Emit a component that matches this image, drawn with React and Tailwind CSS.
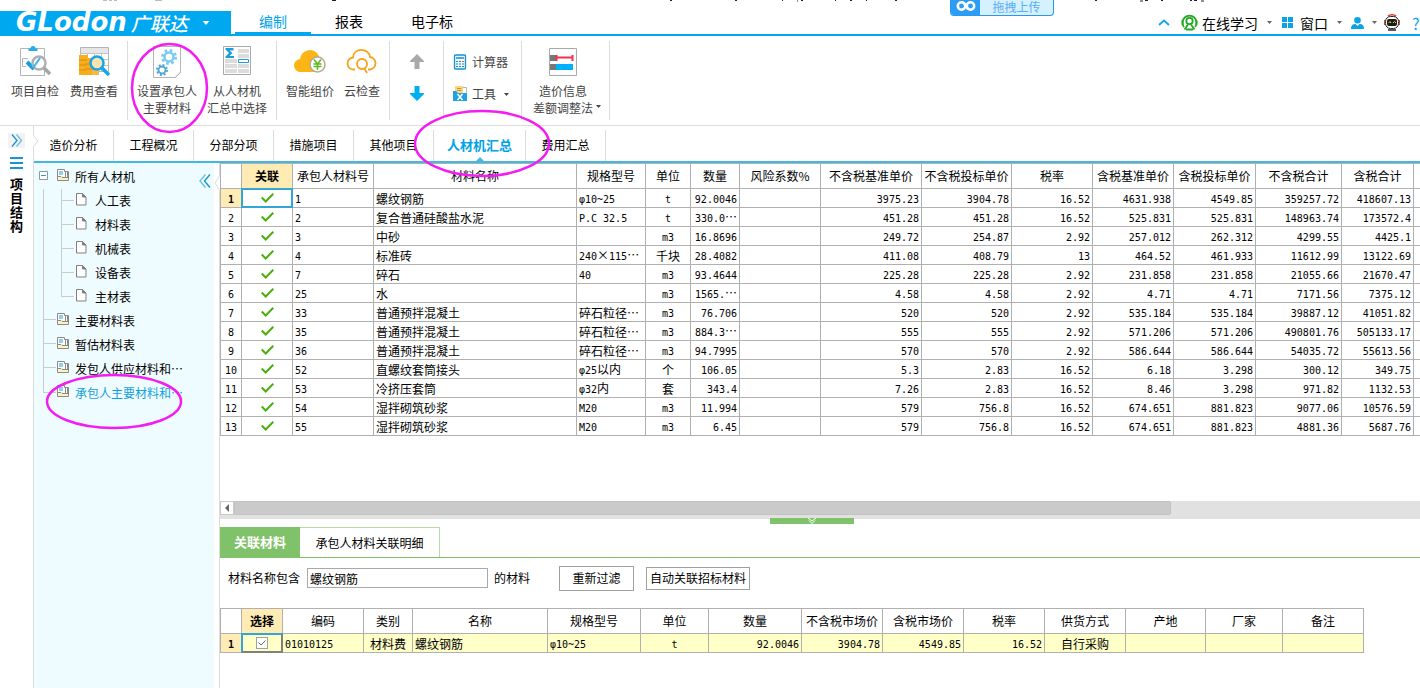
const mainCols = [
    { title: "", w: "w-[21px]" },
    { title: "关联", w: "w-[51px]" },
    { title: "承包人材料号", w: "w-[81px]" },
    { title: "材料名称", w: "w-[203px]" },
    { title: "规格型号", w: "w-[69px]" },
    { title: "单位", w: "w-[45px]", align: "center" },
    { title: "数量", w: "w-[49px]", align: "right" },
    { title: "风险系数%", w: "w-[81px]" },
    { title: "不含税基准单价", w: "w-[101px]", align: "right" },
    { title: "不含税投标单价", w: "w-[90px]", align: "right" },
    { title: "税率", w: "w-[81px]", align: "right" },
    { title: "含税基准单价", w: "w-[81px]", align: "right" },
    { title: "含税投标单价", w: "w-[82px]", align: "right" },
    { title: "不含税合计", w: "w-[86px]", align: "right" },
    { title: "含税合计", w: "w-[72px]", align: "right" },
    { title: "", w: "w-[80px]" },
]

const mainRows = [
    ["1", "螺纹钢筋", "φ10~25", "t", "92.0046", "", "3975.23", "3904.78", "16.52", "4631.938", "4549.85", "359257.72", "418607.13", ""],
    ["2", "复合普通硅酸盐水泥", "P.C 32.5", "t", "330.0⋯", "", "451.28", "451.28", "16.52", "525.831", "525.831", "148963.74", "173572.4", ""],
    ["3", "中砂", "", "m3", "16.8696", "", "249.72", "254.87", "2.92", "257.012", "262.312", "4299.55", "4425.1", ""],
    ["4", "标准砖", "240×115⋯", "千块", "28.4082", "", "411.08", "408.79", "13", "464.52", "461.933", "11612.99", "13122.69", ""],
    ["7", "碎石", "40", "m3", "93.4644", "", "225.28", "225.28", "2.92", "231.858", "231.858", "21055.66", "21670.47", ""],
    ["25", "水", "", "m3", "1565.⋯", "", "4.58", "4.58", "2.92", "4.71", "4.71", "7171.56", "7375.12", ""],
    ["33", "普通预拌混凝土", "碎石粒径⋯", "m3", "76.706", "", "520", "520", "2.92", "535.184", "535.184", "39887.12", "41051.82", ""],
    ["35", "普通预拌混凝土", "碎石粒径⋯", "m3", "884.3⋯", "", "555", "555", "2.92", "571.206", "571.206", "490801.76", "505133.17", ""],
    ["36", "普通预拌混凝土", "碎石粒径⋯", "m3", "94.7995", "", "570", "570", "2.92", "586.644", "586.644", "54035.72", "55613.56", ""],
    ["52", "直螺纹套筒接头", "φ25以内", "个", "106.05", "", "5.3", "2.83", "16.52", "6.18", "3.298", "300.12", "349.75", ""],
    ["53", "冷挤压套筒", "φ32内", "套", "343.4", "", "7.26", "2.83", "16.52", "8.46", "3.298", "971.82", "1132.53", ""],
    ["54", "湿拌砌筑砂浆", "M20", "m3", "11.994", "", "579", "756.8", "16.52", "674.651", "881.823", "9077.06", "10576.59", ""],
    ["55", "湿拌砌筑砂浆", "M20", "m3", "6.45", "", "579", "756.8", "16.52", "674.651", "881.823", "4881.36", "5687.76", ""],
]

const linkCols = [
    { title: "", w: "w-[21px]" },
    { title: "选择", w: "w-[41px]" },
    { title: "编码", w: "w-[81px]" },
    { title: "类别", w: "w-[49px]", align: "center" },
    { title: "名称", w: "w-[135px]" },
    { title: "规格型号", w: "w-[93px]" },
    { title: "单位", w: "w-[68px]", align: "center" },
    { title: "数量", w: "w-[93px]", align: "right" },
    { title: "不含税市场价", w: "w-[81px]", align: "right" },
    { title: "含税市场价", w: "w-[81px]", align: "right" },
    { title: "税率", w: "w-[81px]", align: "right" },
    { title: "供货方式", w: "w-[81px]", align: "center" },
    { title: "产地", w: "w-[80px]" },
    { title: "厂家", w: "w-[77px]" },
    { title: "备注", w: "w-[81px]" },
]

const linkRow = ["01010125", "材料费", "螺纹钢筋", "φ10~25", "t", "92.0046", "3904.78", "4549.85", "16.52", "自行采购", "", "", ""]

const aligns = {
    left: "text-left pl-[2px]",
    center: "text-center",
    right: "text-right pr-[2px]",
}

// latin runs use a mono face, so the digits line up in the columns
function Txt({ children }) {
    return children.split(/([\x20-\x7eφ]+)/).map((part, i) =>
        i % 2 ? <span key={i} className="font-['DejaVu_Sans_Mono',monospace] text-[10px]">{part}</span> : part
    )
}

function Caret({ className = "" }) {
    return <svg className={className} width="5" height="3" viewBox="0 0 5 3"><path d="M0 0h5L2.5 3z" fill="currentColor" /></svg>
}

function Ring({ className }) {
    return <svg className={"absolute z-10 pointer-events-none overflow-visible " + className} viewBox="0 0 100 100" preserveAspectRatio="none">
        <ellipse cx="50" cy="50" rx="50" ry="50" fill="none" stroke="#f31df3" strokeWidth="2.5" vectorEffect="non-scaling-stroke" />
    </svg>
}

/* ---------- ribbon icons ---------- */

function CheckBoardIcon() {
    return <svg width="32" height="34" viewBox="0 0 32 34" fill="none">
        <path d="M1.500 3.500h24v27h-24z" stroke="#b5b5b5" fill="#fff" />
        <path d="M9.500 6V3.500h2a2.500 2.500 0 0 1 5 0h2V6z" fill="#27aee6" />
        <path d="M9 13.500H3.500v8H7" stroke="#b5b5b5" />
        <path d="M8 17l7 7" stroke="#1a9fe0" strokeWidth="4" />
        <circle cx="20" cy="18" r="6.500" fill="#fff" stroke="#b0b0b0" strokeWidth="2.500" />
        <path d="M25 23l6 6" stroke="#a5a5a5" strokeWidth="3.500" />
        <path d="M14 23l7-10" stroke="#35b6ee" strokeWidth="2" />
    </svg>
}

function CostIcon() {
    return <svg width="32" height="34" viewBox="0 0 32 34" fill="none">
        <path d="M2.500 2.500h28v24h-28z" fill="#fff" stroke="#b5b5b5" />
        <path d="M3 3h27v5H3z" fill="#e6e6e6" />
        <path d="M2 8.500h28M2 14.500h28M2 20.500h28M9.500 8v18M16.500 8v18M23.500 8v18" stroke="#c4c4c4" />
        <path d="M1 10h9v20H1zM7 13h10v17H7z" fill="#f9ad1c" />
        <path d="M14 17h7v13h-7z" fill="#f7b943" />
        <path d="M1 15h8M1 20h7M1 25h7M7 19h10M7 24h14" stroke="#d98c0a" />
        <circle cx="19" cy="18" r="6.500" fill="#fbe3b0" stroke="#16a6ea" strokeWidth="2.500" />
        <path d="M24 23l7 7" stroke="#16a6ea" strokeWidth="3.500" />
    </svg>
}

function GearsIcon() {
    return <svg width="30" height="34" viewBox="0 0 30 34" fill="none">
        <path d="M1.500 1.500h27v26l-5 5h-22z" fill="#fff" stroke="#b5b5b5" />
        <path d="M23.500 32l5-5" stroke="#b5b5b5" />
        <circle cx="17" cy="12" r="4.500" stroke="#7ccbf2" strokeWidth="2.500" />
        <circle cx="17" cy="12" r="6.500" stroke="#7ccbf2" strokeWidth="3" strokeDasharray="2.550 2.550" />
        <circle cx="10" cy="25" r="3.500" stroke="#4fa6d6" strokeWidth="1.800" />
        <circle cx="10" cy="25" r="5" stroke="#4fa6d6" strokeWidth="2" strokeDasharray="1.960 1.960" />
    </svg>
}

function SumIcon() {
    return <svg width="28" height="34" viewBox="0 0 28 34" fill="none">
        <path d="M.5 1.500h27v28H.5z" fill="#fff" stroke="#a9a9a9" />
        <path d="M15 4h11v4H15zM2 14h12v4H2zM15 9h11v4H15zM2 19h12v4H2zM15 19h11v4H15zM2 24h12v4H2zM15 24h11v4H15z" fill="#dcdcdc" />
        <path d="M2.500 3h8v2.500H6.500L9.500 8l-3 3h4.500V13H2.500v-1.500L6 8 2.500 4.500z" fill="#1b9fdc" />
        <path d="M15.500 14.500h10v3h-10z" fill="#fff" stroke="#1b9fdc" />
    </svg>
}

function CloudMoneyIcon() {
    return <svg width="32" height="34" viewBox="0 0 32 34" fill="none">
        <path d="M7 27a6.500 6.500 0 0 1-1-13 10 10 0 0 1 17-6 9 9 0 0 1 2 8v11z" fill="#fdb515" />
        <circle cx="23.500" cy="19.500" r="7.500" fill="#fff" stroke="#b3aa90" strokeWidth="1.500" />
        <path d="M20 14.500l3.500 4.500 3.500-4.500M19.500 19h8M19.500 21.500h8M23.500 19v6" stroke="#5fb81c" strokeWidth="1.500" />
    </svg>
}

function CloudSearchIcon() {
    return <svg width="32" height="34" viewBox="0 0 32 34" fill="none" stroke="#f9a11b" strokeWidth="1.800">
        <path d="M9 24.500H8a6 6 0 0 1-1-12C8 2 23 3 24 12a6.300 6.300 0 0 1 0 12.500h-2" />
        <circle cx="16" cy="19" r="5" />
        <path d="M18 23l3 5" />
    </svg>
}

function CalcIcon() {
    return <svg width="14" height="16" viewBox="0 0 14 16" fill="none">
        <rect x="1.500" y="1" width="11" height="14" rx="1" fill="#e9f7fd" stroke="#1d8fc9" strokeWidth="1.300" />
        <path d="M3 4h8" stroke="#1d8fc9" strokeWidth="1.500" />
        <path d="M3 7.500h8M3 10h8M3 12.500h8" stroke="#1d8fc9" strokeDasharray="2 1" />
        <path d="M9 7.500h2" stroke="#f0522a" />
    </svg>
}

function ToolIcon() {
    return <svg width="15" height="16" viewBox="0 0 15 16" fill="none">
        <path d="M9 1.500h4.500v5" stroke="#b5b5b5" />
        <path d="M2 0h8v8H2z" fill="#fbd682" /><path d="M4 2.500h4.500M4 4.500h4.500" stroke="#c69a35" />
        <path d="M0 5h3l2 2h9v8H0z" fill="#1ea3e0" />
        <path d="M4.500 8l5 6M9.500 8l-5 6" stroke="#fff" strokeWidth="1.500" />
    </svg>
}

function PriceIcon() {
    return <svg width="28" height="34" viewBox="0 0 28 34" fill="none">
        <path d="M.5 3.500h27v27H.5z" fill="#fff" stroke="#a9a9a9" />
        <path d="M1 10h6v6H1zM1 19h6v6H1z" fill="#777" />
        <path d="M7 12.500h17M7.500 10v6M23.500 10v6" stroke="#f5304a" strokeWidth="2" />
        <path d="M7 19h17v6H7z" fill="#00b0ff" />
    </svg>
}

function RibbonButton({ icon, lines, caret, ring }) {
    return (
        <button type="button" className="relative flex flex-col items-center pt-1">
            <span className="flex h-[34px] items-center">{icon}</span>
            <span className="mt-[3px] flex flex-col items-center leading-[17px] whitespace-nowrap">
                {lines.map((l, i) => (
                    <span key={l} className="relative">{l}{caret && i === 1 && <Caret className="absolute top-[6px] left-full ml-[3px]" />}</span>
                ))}
            </span>
            {ring && <Ring className="-left-[5px] top-[3px] h-[88px] w-[75px]" />}
        </button>
    )
}

function TopBar() {
    return (
        <header className="relative pt-[11px]">
            {/* descenders of the window title behind */}
            <svg className="absolute top-0 left-0" width="1210" height="3" viewBox="0 0 1210 3" fill="none">
                <path d="M103 .5h4M109 .5h3M114 .5h3M155 .5h7" stroke="#bbb" />
                <path d="M332 .5h4M670 .5h2M735 .5h2M782 .5h1M797 1h1M801 .5h2M835 .5h1M850 .5h2M866 .5h1M895 .5h2M1095 .5h2M1140 1h3M1145 .5h3M1161 .5h2M1190 .5h2M1194 .5h3M1201 1h3" stroke="#222" />
            </svg>
            <div className="absolute top-0 right-[366px] flex h-4 w-[104px] overflow-hidden rounded-b border border-t-0 border-[#2b97f0] bg-[#d5f0ff] text-[#5aaef2]">
                <span className="flex w-[29px] justify-center bg-[#2b9df5]">
                    <svg className="-mt-[3px]" width="20" height="15" viewBox="0 0 20 15" fill="none" stroke="#fff" strokeWidth="2.500">
                        <circle cx="5.500" cy="9" r="3.700" /><circle cx="14.500" cy="9" r="3.700" /><path d="M8 6l4 6" />
                    </svg>
                </span>
                <a href="#upload" className="flex-1 text-center leading-[14px]">拖拽上传</a>
            </div>
            <div className="flex h-[25px] items-stretch border-b-2 border-[#00a8f0]">
                <div className="flex w-[231px] items-center bg-[#00a8f0] pl-4 text-white">
                    <span className="font-['DejaVu_Sans',sans-serif] text-[26px] leading-[23px] font-bold italic">GLodon</span>
                    <span className="ml-1 text-[19px] leading-[23px] font-medium italic">广联达</span>
                    <Caret className="ml-[14px] h-1 w-2" />
                </div>
                <nav className="ml-1 flex text-[14px] leading-5">
                    <a href="#edit" className="-mb-[2px] w-[76px] border-b-4 border-[#00a8f0] text-center text-[#00a2e8]">编制</a>
                    <a href="#report" className="w-[76px] text-center">报表</a>
                    <a href="#tender" className="w-[90px] text-center">电子标</a>
                </nav>
                <div className="ml-auto flex items-center text-[14px] leading-[22px] text-black">
                    <svg width="12" height="7" viewBox="0 0 12 7" fill="none" stroke="#1ba5e6" strokeWidth="2"><path d="M1 6l5-4.500L11 6" /></svg>
                    <svg className="ml-[11px]" width="17" height="17" viewBox="0 0 17 17" fill="none" stroke="#22a822" strokeWidth="1.800">
                        <path d="M3 13A7 7 0 1 1 14 13" /><circle cx="8.500" cy="7" r="3.200" /><path d="M3.500 15.500l3.500-5M13.500 15.500l-3.500-5M5 15.500h7" /><path d="M1.500 6v5M15.500 6v5" />
                    </svg>
                    <a href="#learn" className="ml-1">在线学习</a>
                    <Caret className="ml-[9px] text-[#666]" />
                    <svg className="ml-[10px]" width="11" height="11" viewBox="0 0 11 11" fill="#0da2e8"><path d="M0 0h5v5H0zM6 0h5v5H6zM0 6h5v5H0zM6 6h5v5H6z" /></svg>
                    <a href="#window" className="ml-[7px]">窗口</a>
                    <Caret className="ml-[9px] text-[#666]" />
                    <svg className="ml-[9px]" width="13" height="12" viewBox="0 0 13 12" fill="#0da2e8"><circle cx="6.500" cy="3.300" r="3.300" /><path d="M0 12c0-4 2-5 4.500-5l2 2 2-2C11 7 13 8 13 12z" /></svg>
                    <Caret className="ml-[8px] text-[#666]" />
                    <svg className="ml-[7px]" width="16" height="17" viewBox="0 0 16 17" fill="none">
                        <path d="M4 2Q8-.5 12 2" stroke="#e0442a" strokeWidth="1.500" />
                        <rect x="1.500" y="2.500" width="13" height="12" rx="5" fill="#fff" stroke="#222" />
                        <path d="M0 6v5M16 6v5" stroke="#e0442a" strokeWidth="2" />
                        <rect x="3" y="5" width="10" height="7" rx="2" fill="#1b1b1b" />
                        <path d="M4.500 9l1.500-1.500L7 9M9 9l1.500-1.500L12 9" stroke="#e8e020" />
                        <path d="M4 16h8" stroke="#222" strokeWidth="1.500" />
                    </svg>
                    <a href="#help" className="ml-3 w-[8px] text-[16px] text-[#0da2e8]">?</a>
                </div>
            </div>
        </header>
    )
}

function Ribbon() {
    const group = "flex items-start border-r border-[#dcdcdc]"
    return (
        <div className="flex border-b border-[#dcdcdc] py-[5px] text-[#444]">
            <div className={group + " h-[79px] gap-[11px] pl-[11px] pr-[9px]"}>
                <RibbonButton icon={<CheckBoardIcon />} lines={["项目自检"]} />
                <RibbonButton icon={<CostIcon />} lines={["费用查看"]} />
            </div>
            <div className={group + " h-[79px] gap-[10px] px-[9px]"}>
                <RibbonButton icon={<GearsIcon />} lines={["设置承包人", "主要材料"]} ring />
                <RibbonButton icon={<SumIcon />} lines={["从人材机", "汇总中选择"]} />
            </div>
            <div className={group + " gap-[10px] px-[9px]"}>
                <RibbonButton icon={<CloudMoneyIcon />} lines={["智能组价"]} />
                <RibbonButton icon={<CloudSearchIcon />} lines={["云检查"]} />
            </div>
            <div className={group + " w-[54px] flex-col !items-center gap-4 pt-[13px]"}>
                <button type="button" aria-label="上移">
                    <svg className="block" width="14" height="16" viewBox="0 0 14 16" fill="#a9a9a9"><path d="M7 0l7 7v1h-4.500v7h-5V8H0V7z" /></svg>
                </button>
                <button type="button" aria-label="下移">
                    <svg className="block" width="14" height="16" viewBox="0 0 14 16" fill="#00aff0"><path d="M7 15l7-7V7h-4.500V0h-5v7H0v1z" /></svg>
                </button>
            </div>
            <div className={group + " w-[78px] flex-col gap-4 pt-[13px] pl-[9px] leading-4"}>
                <button type="button" className="flex items-center gap-[5px]"><CalcIcon />计算器</button>
                <button type="button" className="flex items-center gap-[4px]"><ToolIcon />工具<Caret className="ml-1" /></button>
            </div>
            <div className={group + " h-[79px] pl-[11px] pr-[16px]"}>
                <RibbonButton icon={<PriceIcon />} lines={["造价信息", "差额调整法"]} caret />
            </div>
        </div>
    )
}

function Rail() {
    return (
        <div className="flex w-[34px] shrink-0 flex-col items-center border-r border-[#dcdcdc] pt-[7px]">
            <button type="button" aria-label="展开" className="flex h-[15px] w-[17px] items-center justify-center bg-[#f2f2f2]">
                <svg width="12" height="13" viewBox="0 0 12 13" fill="none" strokeWidth="1.300"><path d="M1 .5l5 6-5 6" stroke="#1794c9" /><path d="M5.500.5l5 6-5 6" stroke="#6cc0e2" /></svg>
            </button>
            <svg className="mt-[9px]" width="13" height="12" viewBox="0 0 13 12" fill="#1794d2"><path d="M0 0h13v2H0zM0 5h13v2H0zM0 10h13v2H0z" /></svg>
            <h2 className="mt-2 w-[13px] text-[13px] leading-[14px] font-bold break-all">项目结构</h2>
        </div>
    )
}

const modules = ["造价分析", "工程概况", "分部分项", "措施项目", "其他项目", "人材机汇总", "费用汇总"]

function ModuleTabs() {
    return (
        <nav className="relative flex border-b-2 border-[#43b8e3] pt-1">
            <svg className="absolute top-[9px] -left-px" width="6" height="12" viewBox="0 0 6 12" fill="#fff" stroke="#dcdcdc"><path d="M0 0l5 6-5 6" /></svg>
            {modules.map(m => m === "人材机汇总" ? (
                <a key={m} href="#" className="relative w-[92px] border-r border-[#dcdcdc] pb-0.5 text-center text-[13px] leading-[29px] font-bold text-[#00a2e8]">
                    {m}
                    <svg className="absolute bottom-0 left-[42px]" width="8" height="4" viewBox="0 0 8 4" fill="#43b8e3"><path d="M0 4l4-4 4 4z" /></svg>
                    <Ring className="-left-[19px] -top-[19px] h-[65px] w-[134px]" />
                </a>
            ) : (
                <a key={m} href="#" className="w-[80px] border-r border-[#dcdcdc] pb-0.5 text-center leading-[29px]">{m}</a>
            ))}
        </nav>
    )
}

function BookIcon() {
    return <svg width="13" height="13" viewBox="0 0 13 13" fill="none">
        <path d="M.5 11.500V.5h7v2h4v9z" fill="#fff" stroke="#8a8a8a" />
        <path d="M2 3h4M2 5h4" stroke="#2b9fd6" /><path d="M8.500 2v6M10.500 3v5" stroke="#8a8a8a" />
        <path d="M1 8h3l1 1h6v2H1z" fill="#fdf3bd" />
        <path d="M.5 7.500h3.500l1 1h6" stroke="#8a8a8a" />
    </svg>
}

function PageIcon() {
    return <svg width="11" height="13" viewBox="0 0 11 13" fill="#fff" stroke="#808080"><path d="M.5.5h6l3.500 3.500v8H.5z" /><path d="M6.500.5V4H10z" fill="#808080" /></svg>
}

function Sidebar() {
    return (
        <aside className="relative w-[180px] shrink-0 bg-[#effcff] pt-0.5 leading-6">
            <button type="button" aria-label="收起" className="absolute top-[11px] right-[3px]">
                <svg width="12" height="14" viewBox="0 0 12 14" fill="none" strokeWidth="1.400"><path d="M6.500.5L1 7l5.500 6.500" stroke="#6cc0e2" /><path d="M11 .5L5.500 7l5.500 6.500" stroke="#1794c9" /></svg>
            </button>
            <div className="flex h-6 items-center pl-[5px]">
                <svg className="-mt-1" width="9" height="9" viewBox="0 0 9 9" fill="#fff" stroke="#8a9aa3"><path d="M.5.5h8v8h-8z" /><path d="M2 4.500h5" stroke="#2b9fd6" /></svg>
                <span className="-mt-1 mr-[5px] ml-[9px]"><BookIcon /></span>
                所有人材机
            </div>
            <ul className="ml-[9px] border-l border-[#c6cccf]">
                {["人工表", "材料表", "机械表", "设备表", "主材表"].map((t, i) => (
                    <li key={t} className="ml-[17px] flex h-6 items-center">
                        <span className={"w-[13px] self-start border-b border-l border-[#c6cccf] " + (i ? "-mt-3 h-6" : "h-3")}></span>
                        <span className="-mt-1 mr-2 ml-[2px]"><PageIcon /></span>
                        {t}
                    </li>
                ))}
                {["主要材料表", "暂估材料表", "发包人供应材料和⋯"].map(t => (
                    <li key={t} className="flex h-6 items-center">
                        <span className="-mt-1 w-3 border-t border-[#c6cccf]"></span>
                        <span className="-mt-1 mr-[5px] ml-px"><BookIcon /></span>
                        {t}
                    </li>
                ))}
            </ul>
            <div className="relative ml-[9px] flex h-6 items-center text-[#12a0dc]">
                <span className="h-3 w-[13px] self-start border-b border-l border-[#c6cccf]"></span>
                <span className="-mt-1 mr-[5px] ml-px"><BookIcon /></span>
                承包人主要材料和⋯
                <Ring className="-top-[6px] left-1 h-[53px] w-[134px]" />
            </div>
        </aside>
    )
}

function Head({ cols }) {
    return (
        <>
            <colgroup>{cols.map((c, i) => <col key={i} className={c.w} />)}</colgroup>
            <thead>
                <tr className="h-[25px]">
                    {cols.map((c, i) => (
                        <th key={i} className={"overflow-hidden border-r border-b border-[#b0b0b0] p-0 whitespace-nowrap " + (i === 1 ? "bg-[#ffecb5] font-bold" : "font-normal")}>{c.title}</th>
                    ))}
                </tr>
            </thead>
        </>
    )
}

const cell = "border-r border-b border-[#b0b0b0] overflow-hidden whitespace-nowrap pt-px "

function MaterialTable() {
    return (
        <div className="overflow-hidden">
            <table className="w-[1274px] table-fixed border-separate border-spacing-0 border-t border-l border-[#b0b0b0] leading-3">
                <Head cols={mainCols} />
                <tbody>
                    {mainRows.map((row, r) => (
                        <tr key={r} className="h-[19px]">
                            <td className={cell + "text-center " + (r === 0 ? "bg-[#ffecb5] font-bold" : "")}><Txt>{String(r + 1)}</Txt></td>
                            <td className="relative border-r border-b border-[#b0b0b0]">
                                <svg className="mx-auto" width="13" height="10" viewBox="0 0 13 10" fill="none" stroke="#4caf0f" strokeWidth="2"><path d="M.7 4.500l4 4L12.300.8" /></svg>
                                {r === 0 && <span className="absolute -inset-px border-2 border-[#33a6d8]"></span>}
                            </td>
                            {row.map((v, i) => <td key={i} className={cell + aligns[mainCols[i + 2].align || "left"]}><Txt>{v}</Txt></td>)}
                        </tr>
                    ))}
                </tbody>
            </table>
        </div>
    )
}

function LinkPanel() {
    return (
        <section className="pt-2">
            <div className="flex h-[31px] border-b border-[#80c269]">
                <button type="button" className="w-[80px] bg-[#80c269] text-[13px] font-bold text-white">关联材料</button>
                <button type="button" className="w-[140px] border-t border-r border-[#b5dca5]">承包人材料关联明细</button>
            </div>
            <form className="flex h-[50px] items-center pb-[10px] pl-2" onSubmit={e => e.preventDefault()}>
                <label htmlFor="kw">材料名称包含</label>
                <input id="kw" type="text" defaultValue="螺纹钢筋" className="ml-[7px] h-5 w-[181px] border border-[#a9a9a9] px-0.5 outline-none" />
                <span className="ml-[6px]">的材料</span>
                <button type="submit" className="ml-[29px] h-[25px] w-[75px] border border-[#a0a0a0]">重新过滤</button>
                <button type="button" className="ml-3 h-[23px] w-[104px] border border-[#a0a0a0]">自动关联招标材料</button>
            </form>
            <table className="w-[1144px] table-fixed border-separate border-spacing-0 border-t border-l border-[#b0b0b0] leading-3">
                <Head cols={linkCols} />
                <tbody>
                    <tr className="h-[19px] bg-[#ffffc8]">
                        <td className={cell + "bg-[#ffecb5] text-center font-bold"}><Txt>1</Txt></td>
                        <td className="relative border-r border-b border-[#b0b0b0]">
                            <input type="checkbox" aria-label="选择" defaultChecked className="peer mx-auto block h-3 w-3 appearance-none border border-[#a0a0a0] bg-white" />
                            <svg className="pointer-events-none absolute top-[6px] left-[16px] hidden peer-checked:block" width="8" height="6" viewBox="0 0 8 6" fill="none" stroke="#666"><path d="M.5 2.500l2.500 2.500L7.500.5" /></svg>
                            <span className="pointer-events-none absolute -inset-px border-2 border-t-[#33a6d8] border-r-[#808080] border-b-[#808080] border-l-[#33a6d8]"></span>
                        </td>
                        {linkRow.map((v, i) => <td key={i} className={cell + aligns[linkCols[i + 2].align || "left"]}><Txt>{v}</Txt></td>)}
                    </tr>
                </tbody>
            </table>
        </section>
    )
}

export default function App() {
    return (
        <div className="flex min-h-screen flex-col overflow-hidden bg-white font-['Noto_Sans_CJK_SC',sans-serif] text-[12px] leading-[18px] text-black">
            <TopBar />
            <Ribbon />
            <div className="flex flex-1">
                <Rail />
                <div className="flex min-w-0 flex-1 flex-col">
                    <ModuleTabs />
                    <div className="flex flex-1">
                        <Sidebar />
                        <main className="relative ml-[5px] min-w-0 flex-1 border-l border-[#dcdcdc]">
                            <svg className="absolute top-[12px] -left-[6px]" width="7" height="16" viewBox="0 0 7 16" fill="#fff" stroke="#dcdcdc"><path d="M6 0L1 8l5 8" /></svg>
                            <MaterialTable />
                            <div className="relative mt-[65px] flex h-[18px] items-start bg-[#e1e1e1]">
                                <button type="button" aria-label="向左" className="flex h-[14px] w-[14px] items-center justify-center border border-[#cacaca] bg-white">
                                    <svg width="4" height="8" viewBox="0 0 4 8" fill="#666"><path d="M4 0v8L0 4z" /></svg>
                                </button>
                                <div className="flex-1"><div className="h-[14px] w-[79%] rounded-r-xs border border-[#c3c3c3] bg-[#cacaca]"></div></div>
                                <button type="button" aria-label="收起面板" className="absolute top-[17px] left-[550px] flex h-[6px] w-[84px] justify-center bg-[#80c269]">
                                    <svg width="10" height="6" viewBox="0 0 10 6" fill="none" stroke="#fff"><path d="M1 0l4 3 4-3M2 2.500l3 3 3-3" /></svg>
                                </button>
                            </div>
                            <LinkPanel />
                        </main>
                    </div>
                </div>
            </div>
        </div>
    )
}
